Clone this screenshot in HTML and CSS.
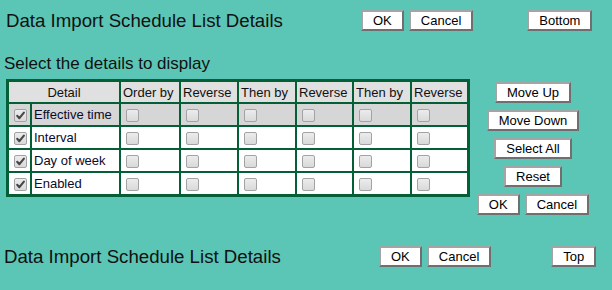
FILE: index.html
```html
<!DOCTYPE html>
<html>
<head>
<meta charset="utf-8">
<link rel="stylesheet" href="styles.css">
</head>
<body>
<div class="bar bar-top">
  <h1 class="title title-top">Data Import Schedule List Details</h1>
  <button class="btn">OK</button>
  <button class="btn gap5">Cancel</button>
  <button class="btn gap-bottom">Bottom</button>
</div>

<p class="lead">Select the details to display</p>

<div class="main">
  <table class="grid">
    <colgroup>
      <col class="col-chk">
      <col class="col-name">
      <col class="col-order">
      <col class="col-56">
      <col class="col-56">
      <col class="col-55">
      <col class="col-56">
      <col class="col-55">
    </colgroup>
    <thead>
      <tr>
        <th colspan="2" class="th-detail">Detail</th>
        <th>Order by</th>
        <th>Reverse</th>
        <th>Then by</th>
        <th>Reverse</th>
        <th>Then by</th>
        <th>Reverse</th>
      </tr>
    </thead>
    <tbody>
      <tr class="sel">
        <td class="c-chk"><span class="cb"><svg viewBox="0 0 13 13" width="13" height="13"><path d="M3.2 6.8 L5.4 9.2 L9.9 3.6" fill="none" stroke="#474747" stroke-width="2.1" stroke-linecap="round" stroke-linejoin="round"/></svg></span></td>
        <td class="c-name">Effective time</td>
        <td class="c-box"><span class="cb"></span></td>
        <td class="c-box"><span class="cb"></span></td>
        <td class="c-box"><span class="cb"></span></td>
        <td class="c-box"><span class="cb"></span></td>
        <td class="c-box"><span class="cb"></span></td>
        <td class="c-box"><span class="cb"></span></td>
      </tr>
      <tr>
        <td class="c-chk"><span class="cb"><svg viewBox="0 0 13 13" width="13" height="13"><path d="M3.2 6.8 L5.4 9.2 L9.9 3.6" fill="none" stroke="#474747" stroke-width="2.1" stroke-linecap="round" stroke-linejoin="round"/></svg></span></td>
        <td class="c-name">Interval</td>
        <td class="c-box"><span class="cb"></span></td>
        <td class="c-box"><span class="cb"></span></td>
        <td class="c-box"><span class="cb"></span></td>
        <td class="c-box"><span class="cb"></span></td>
        <td class="c-box"><span class="cb"></span></td>
        <td class="c-box"><span class="cb"></span></td>
      </tr>
      <tr>
        <td class="c-chk"><span class="cb"><svg viewBox="0 0 13 13" width="13" height="13"><path d="M3.2 6.8 L5.4 9.2 L9.9 3.6" fill="none" stroke="#474747" stroke-width="2.1" stroke-linecap="round" stroke-linejoin="round"/></svg></span></td>
        <td class="c-name">Day of week</td>
        <td class="c-box"><span class="cb"></span></td>
        <td class="c-box"><span class="cb"></span></td>
        <td class="c-box"><span class="cb"></span></td>
        <td class="c-box"><span class="cb"></span></td>
        <td class="c-box"><span class="cb"></span></td>
        <td class="c-box"><span class="cb"></span></td>
      </tr>
      <tr>
        <td class="c-chk"><span class="cb"><svg viewBox="0 0 13 13" width="13" height="13"><path d="M3.2 6.8 L5.4 9.2 L9.9 3.6" fill="none" stroke="#474747" stroke-width="2.1" stroke-linecap="round" stroke-linejoin="round"/></svg></span></td>
        <td class="c-name">Enabled</td>
        <td class="c-box"><span class="cb"></span></td>
        <td class="c-box"><span class="cb"></span></td>
        <td class="c-box"><span class="cb"></span></td>
        <td class="c-box"><span class="cb"></span></td>
        <td class="c-box"><span class="cb"></span></td>
        <td class="c-box"><span class="cb"></span></td>
      </tr>
    </tbody>
  </table>

  <div class="side">
    <button class="btn">Move Up</button>
    <button class="btn">Move Down</button>
    <button class="btn">Select All</button>
    <button class="btn">Reset</button>
    <div class="pair">
      <button class="btn">OK</button>
      <button class="btn">Cancel</button>
    </div>
  </div>
</div>

<div class="bar bar-bottom">
  <h1 class="title title-bottom">Data Import Schedule List Details</h1>
  <button class="btn">OK</button>
  <button class="btn gap5">Cancel</button>
  <button class="btn gap-top">Top</button>
</div>
</body>
</html>
```

FILE: styles.css
```css
html, body {
  margin: 0;
  padding: 0;
}
body {
  background: #5cc6b6;
  font-family: "Liberation Sans", Arial, sans-serif;
  color: #000;
  width: 612px;
  height: 290px;
  overflow: hidden;
}

.bar {
  display: flex;
  align-items: center;
  height: 21px;
}
.bar-top {
  padding-top: 10px;
  padding-left: 6px;
}
.bar-bottom {
  margin-top: 31px;
  padding-left: 4px;
}
.title {
  margin: 0;
  font-size: 18.67px;
  font-weight: normal;
  line-height: 21px;
  color: #111;
}
.title-top { width: 355px; }
.title-bottom { width: 375px; }

.btn {
  font-family: "Liberation Sans", Arial, sans-serif;
  font-size: 13px;
  line-height: 15px;
  height: 21px;
  padding: 1px 10px;
  margin: 0;
  background: #fff;
  color: #000;
  border: 2px solid;
  border-color: #a4a4a4 #6f6f6f #6f6f6f #a4a4a4;
  border-radius: 0;
  box-sizing: border-box;
  white-space: nowrap;
}
.gap5 { margin-left: 5px; }
.gap-bottom { margin-left: 54px; }
.gap-top { margin-left: 60px; }

.lead {
  margin: 24px 0 0 4px;
  font-size: 17px;
  line-height: 18px;
  height: 18px;
  color: #111;
}

.main {
  display: flex;
  align-items: flex-start;
  margin-top: 6px;
  padding-left: 6px;
}

.grid {
  border-collapse: separate;
  border-spacing: 2px;
  background: #045f36;
  border: 1px solid #045f36;
  font-size: 13px;
  line-height: 15px;
  width: 464px;
  table-layout: fixed;
  flex: none;
}
.col-chk { width: 21px; }
.col-name { width: 87px; }
.col-order { width: 58px; }
.col-56 { width: 56px; }
.col-55 { width: 55px; }

.grid th {
  background: #e0e0e0;
  font-weight: normal;
  text-align: left;
  height: 20px;
  padding: 0 2px;
  box-sizing: border-box;
  white-space: nowrap;
  overflow: hidden;
  color: #111;
}
.grid th.th-detail {
  text-align: center;
}

.grid td {
  background: #fff;
  height: 21px;
  padding: 0 2px;
  box-sizing: border-box;
  white-space: nowrap;
  color: #0a0a2a;
}
.grid tr.sel td { background: #d6d6d6; }
.grid td.c-chk {
  padding: 0;
  text-align: center;
}
.grid td.c-box {
  padding: 0 0 0 5px;
}

.cb {
  display: inline-block;
  vertical-align: middle;
  width: 13px;
  height: 13px;
  box-sizing: border-box;
  border: 1px solid #a3a3a3;
  border-radius: 2px;
  background: linear-gradient(#ececec, #d9d9d9);
}
.cb svg {
  display: block;
  margin: -1px;
}
.grid td.c-chk .cb { margin-left: 1px; }

.side {
  width: 126px;
  display: flex;
  flex-direction: column;
  align-items: center;
  gap: 7px;
  padding-top: 3px;
}
.pair {
  display: flex;
  gap: 5px;
}
```
